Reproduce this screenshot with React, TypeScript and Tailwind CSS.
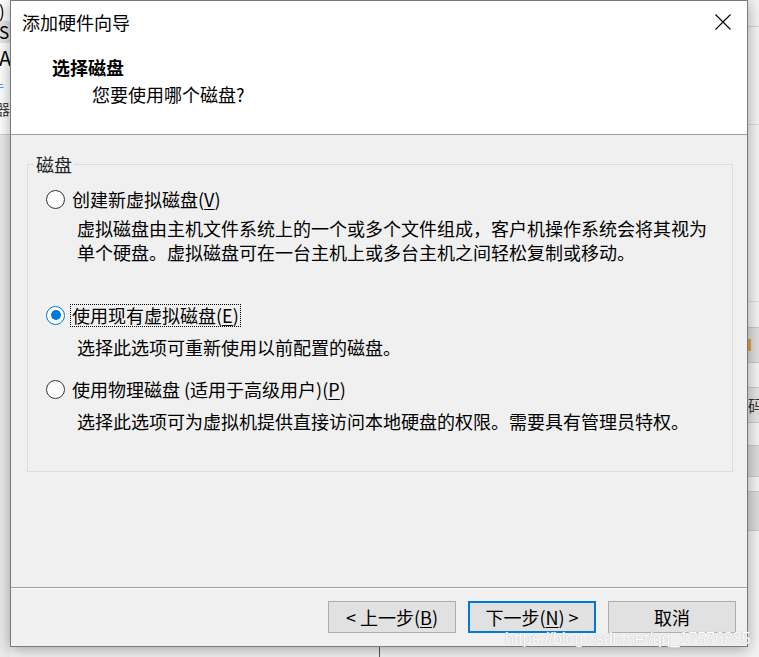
const cjk = "[font-family:'Noto_Sans_CJK_SC',sans-serif]";

function Radio({ checked }: { checked?: boolean }) {
  if (checked) {
    return (
      <span className="flex h-[19px] w-[19px] shrink-0 items-center justify-center rounded-full border border-[#0078d7] bg-white">
        <span className="h-[10px] w-[10px] rounded-full bg-[#0078d7]" />
      </span>
    );
  }
  return <span className="h-[19px] w-[19px] shrink-0 rounded-full border-[1.5px] border-[#333] bg-white" />;
}

const CloseIcon = () => (
  <svg width="16" height="16" viewBox="0 0 16 16" fill="none" stroke="#000" strokeWidth="1.1">
    <path d="M0.5 0.5 L15.5 15.5 M15.5 0.5 L0.5 15.5" />
  </svg>
);

const Btn = ({ children, focused }: { children: React.ReactNode; focused?: boolean }) => (
  <button
    className={
      focused
        ? 'flex h-[32px] w-[128px] items-center justify-center border-2 border-[#0078d7] bg-[#e1e1e1] text-[18px] leading-[24px] text-black'
        : 'flex h-[32px] w-[128px] items-center justify-center border border-[#adadad] bg-[#e1e1e1] text-[18px] leading-[24px] text-black'
    }
  >
    {children}
  </button>
);

export default function App() {
  return (
    <div className={`relative flex h-[657px] w-[759px] overflow-hidden bg-[#ececec] ${cjk}`}>
      {/* bits of the window behind, left side */}
      <div className="flex w-[10px] shrink-0 flex-col overflow-hidden bg-white text-black">
        <div className="h-[21px] overflow-hidden text-[17px] leading-[21px] -ml-[1px]">)</div>
        <div className="h-[22px] overflow-hidden whitespace-nowrap bg-[#e6e6e6] text-[17px] leading-[22px] -ml-[1px]">S</div>
        <div className="mt-[3px] h-[23px] overflow-hidden text-[20px] leading-[23px] -ml-[1px]">A</div>
        <div className="h-[30px] overflow-hidden pt-[14px] text-[10px] leading-[10px] text-[#3a7bd5] -ml-[6px]">于</div>
        <div className="h-[35px] overflow-hidden text-[15px] leading-[20px] text-[#444] -ml-[5px]">器</div>
        <div className="h-px bg-[#d0d0d0]" />
        <div className="flex-1 bg-[#ebebeb]" />
      </div>

      <div className="flex w-[738px] shrink-0 flex-col">
        <div className="relative z-10 flex h-[647px] flex-col border border-[#7a7a7a] bg-[#f0f0f0] shadow-[0_2px_14px_rgba(0,0,0,0.35)]">
          {/* header */}
          <div className="h-[134px] shrink-0 border-b border-[#a0a0a0] bg-white pt-[9px] text-black">
            <div className="flex h-[24px] items-center justify-between pl-[11px] pr-[16px]">
              <span className="text-[18px] leading-[24px]">添加硬件向导</span>
              <CloseIcon />
            </div>
            <div className="mt-[21px] pl-[41px] text-[18px] font-bold leading-[24px]">选择磁盘</div>
            <div className="mt-[3px] pl-[81px] text-[18px] leading-[24px]">您要使用哪个磁盘?</div>
          </div>

          {/* body */}
          <div className="h-[452px] shrink-0 text-[18px] leading-[24px] text-black">
            <fieldset className="ml-[16px] mr-[14px] mt-[17px] h-[320px] border border-[#dcdcdc]">
              <legend className="ml-[6px] px-[2px] leading-[24px] text-[#222]">磁盘</legend>
              <div className="flex flex-col">
                <div className="mt-[11px] flex h-[24px] items-center pl-[18px]">
                  <Radio />
                  <span className="ml-[7px]">
                    创建新虚拟磁盘(<span className="underline underline-offset-2">V</span>)
                  </span>
                </div>
                <div className="mt-[5px] pl-[49px]">
                  虚拟磁盘由主机文件系统上的一个或多个文件组成，客户机操作系统会将其视为
                  <br />
                  单个硬盘。虚拟磁盘可在一台主机上或多台主机之间轻松复制或移动。
                </div>

                <div className="mt-[39px] flex h-[24px] items-center pl-[18px]">
                  <Radio checked />
                  <span className="ml-[5px] flex h-[23px] items-center border border-dotted border-black px-[1px]">
                    使用现有虚拟磁盘(<span className="underline underline-offset-2">E</span>)
                  </span>
                </div>
                <div className="mt-[8px] pl-[49px]">选择此选项可重新使用以前配置的磁盘。</div>

                <div className="mt-[18px] flex h-[24px] items-center pl-[18px]">
                  <Radio />
                  <span className="ml-[7px]">
                    使用物理磁盘 (适用于高级用户)(<span className="underline underline-offset-2">P</span>)
                  </span>
                </div>
                <div className="mt-[8px] pl-[49px]">选择此选项可为虚拟机提供直接访问本地硬盘的权限。需要具有管理员特权。</div>
              </div>
            </fieldset>
          </div>

          {/* footer */}
          <div className="flex-1 border-t border-[#a0a0a0]">
            <div className="flex h-full justify-end gap-[12px] border-t border-white pr-[11px] pt-[12px]">
              <Btn>
                &lt;&nbsp;上一步(<span className="underline underline-offset-2">B</span>)
              </Btn>
              <Btn focused>
                下一步(<span className="underline underline-offset-2">N</span>)&nbsp;&gt;
              </Btn>
              <Btn>取消</Btn>
            </div>
          </div>
        </div>

        {/* strip below the dialog */}
        <div className="flex h-[10px] bg-[#f2f2f2]">
          <div className="w-[369px]" />
          <div className="w-px bg-[#555]" />
          <div className="flex-1" />
        </div>
      </div>

      {/* bits of the window behind, right side */}
      <div className="flex w-[11px] shrink-0 flex-col bg-[#f4f4f4]">
        <div className="h-[27px] border-b border-[#d6d6d6]" />
        <div className="h-[98px] border-b border-[#dcdcdc]" />
        <div className="h-[44px]" />
        <div className="h-[133px] border-b border-[#dcdcdc]" />
        <div className="h-[26px] border-b border-[#c8c8c8]" />
        <div className="flex h-[35px] items-center border-b border-[#c8c8c8] bg-[#dedede]">
          <span className="h-[12px] w-[3px] bg-[#e8a040]" />
        </div>
        <div className="h-[25px] border-b border-[#c8c8c8]" />
        <div className="h-[35px] overflow-hidden border-b border-[#c8c8c8] bg-[#e4e4e4] text-[16px] leading-[35px] text-[#333]">码</div>
        <div className="h-[22px]" />
        <div className="h-[32px] border-y border-[#c8c8c8] bg-[#dcdcdc]" />
        <div className="h-[14px]" />
        <div className="h-[40px] border-y border-[#c8c8c8] bg-[#dcdcdc]" />
        <div className="flex-1" />
      </div>

      {/* watermark */}
      <div className="absolute left-[505px] top-[630px] z-20 whitespace-nowrap text-[16px] leading-[18px] text-white [font-family:'Liberation_Sans',Arial,sans-serif] [text-shadow:0_0_1px_#b4b4b4,0_0_1px_#c8c8c8]">
        https://blog.csdn.net/qq_17576885
      </div>
    </div>
  );
}
